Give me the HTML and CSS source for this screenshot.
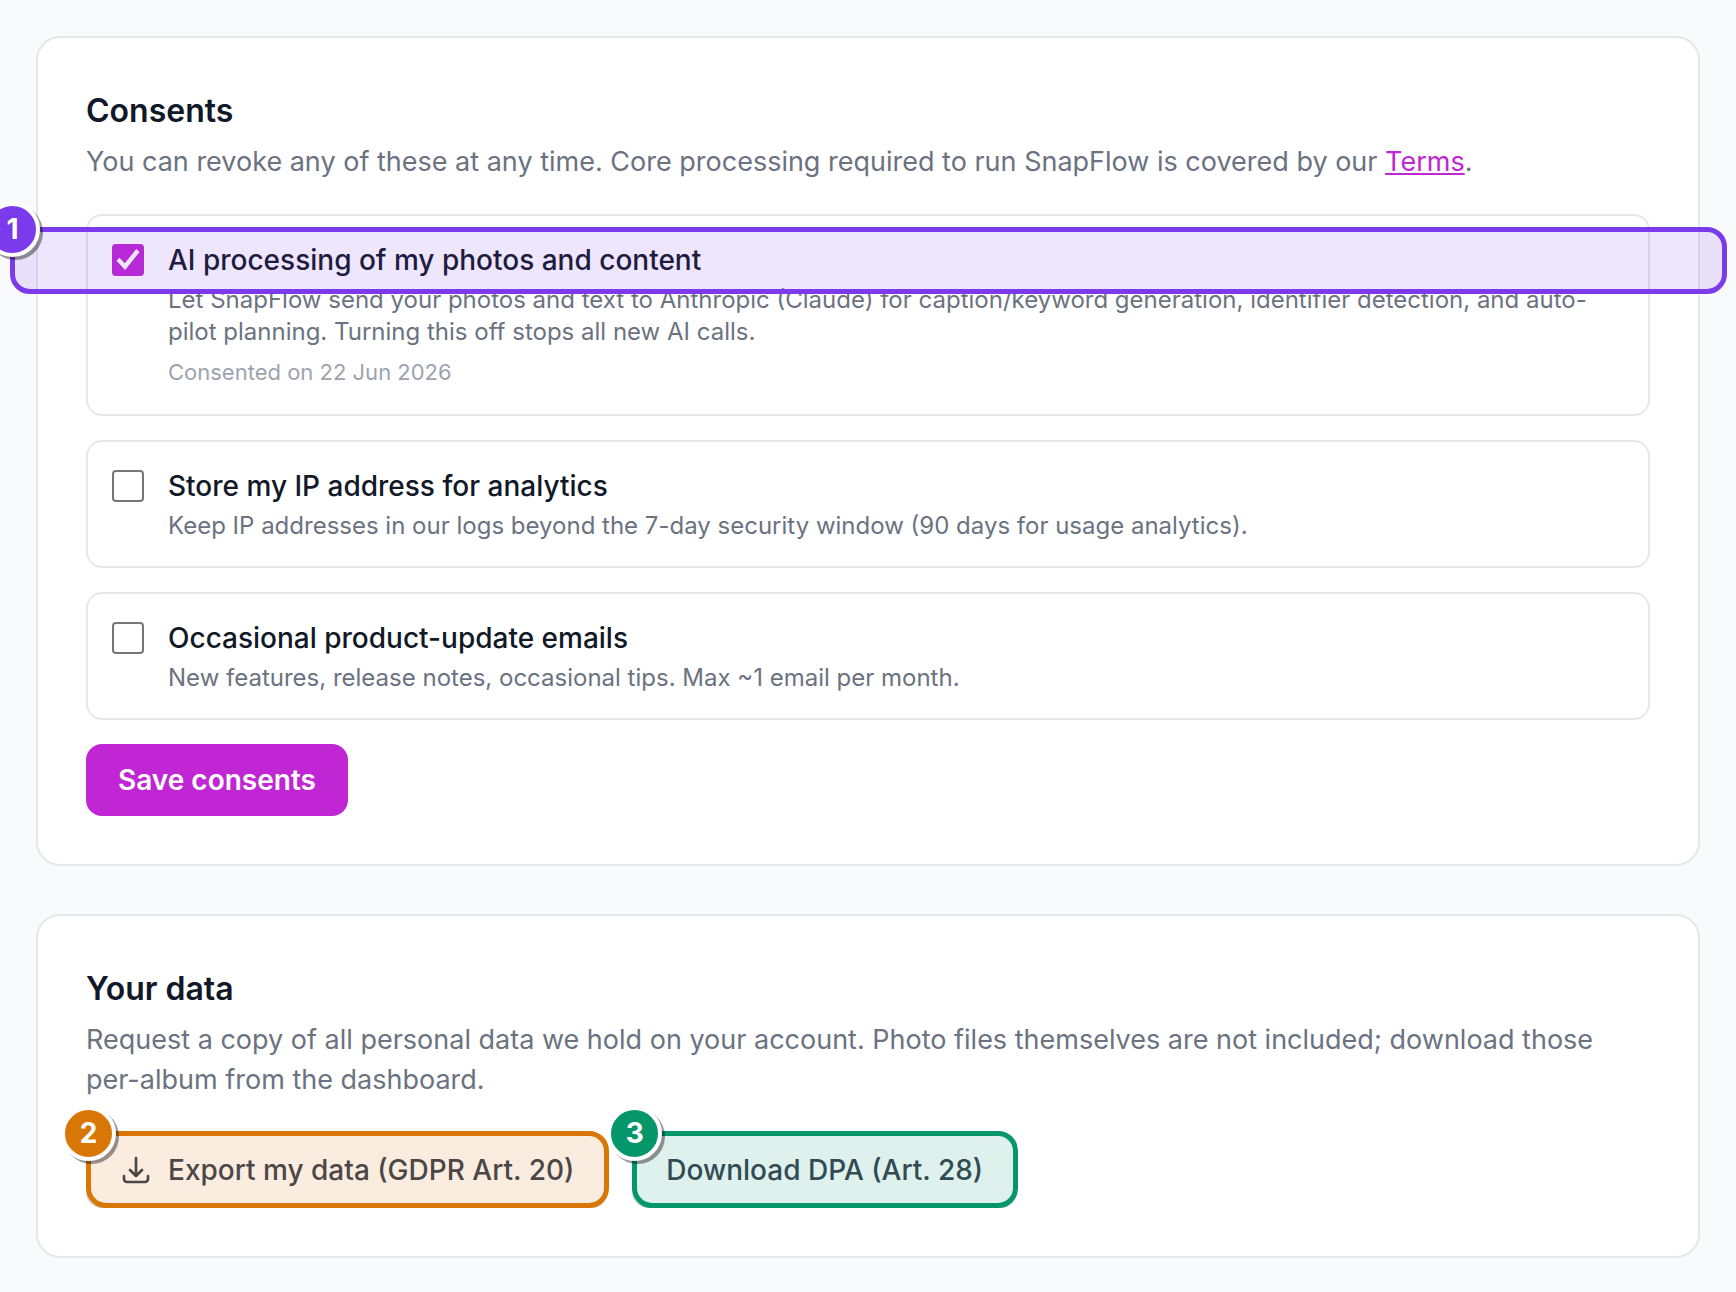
FILE: index.html
```html
<!DOCTYPE html>
<html lang="en">
<head>
  <meta charset="UTF-8">
  <meta name="viewport" content="width=device-width, initial-scale=1">
  <title>SnapFlow - Privacy</title>
  <link rel="stylesheet" href="styles.css">
</head>
<body>
  <main class="page">
    <!-- Consents -->
    <section class="card">
      <h2>Consents</h2>
      <p class="intro">You can revoke any of these at any time. Core processing required to run SnapFlow is covered by our <a href="#terms">Terms</a>.</p>
      <form class="consents">
        <div class="option">
          <input type="checkbox" id="consentAi" checked>
          <div class="option-text">
            <label for="consentAi">AI processing of my photos and content</label>
            <p>Let SnapFlow send your photos and text to Anthropic (Claude) for caption/keyword generation, identifier detection, and auto-pilot planning. Turning this off stops all new AI calls.</p>
            <p class="meta">Consented on 22 Jun 2026</p>
          </div>
          <div class="callout callout-row purple"><span class="badge">1</span></div>
        </div>
        <div class="option">
          <input type="checkbox" id="consentIp">
          <div class="option-text">
            <label for="consentIp">Store my IP address for analytics</label>
            <p>Keep IP addresses in our logs beyond the 7-day security window (90 days for usage analytics).</p>
          </div>
        </div>
        <div class="option">
          <input type="checkbox" id="consentEmail">
          <div class="option-text">
            <label for="consentEmail">Occasional product-update emails</label>
            <p>New features, release notes, occasional tips. Max ~1 email per month.</p>
          </div>
        </div>
        <button type="button" class="btn-primary">Save consents</button>
      </form>
    </section>

    <!-- Your data -->
    <section class="card">
      <h2>Your data</h2>
      <p class="intro">Request a copy of all personal data we hold on your account. Photo files themselves are not included; download those per-album from the dashboard.</p>
      <div class="actions">
        <div class="action">
          <button type="button" class="btn-secondary">
            <svg class="icon" viewBox="0 0 24 24" fill="none" stroke="currentColor" stroke-width="2" stroke-linecap="round" stroke-linejoin="round" aria-hidden="true">
              <path d="M3 16.5v2.25A2.25 2.25 0 0 0 5.25 21h13.5A2.25 2.25 0 0 0 21 18.75V16.5M16.5 12 12 16.5m0 0L7.5 12m4.5 4.5V3"/>
            </svg>
            Export my data (GDPR Art. 20)
          </button>
          <div class="callout orange"><span class="badge">2</span></div>
        </div>
        <div class="action">
          <button type="button" class="btn-secondary">Download DPA (Art. 28)</button>
          <div class="callout green"><span class="badge">3</span></div>
        </div>
      </div>
    </section>
  </main>
</body>
</html>
```

FILE: styles.css
```css
* {
  box-sizing: border-box;
  margin: 0;
  padding: 0;
}
body {
  background: #f9fafb;
  font-family: Inter, "Liberation Sans", sans-serif;
  font-size: 28px;
  line-height: 40px;
  color: #111827;
}
.page {
  display: flex;
  flex-direction: column;
  gap: 48px;
  padding: 36px;
}
.card {
  background: white;
  border: 2px solid #e5e7eb;
  border-radius: 24px;
  padding: 48px;
}
h2 {
  font-size: 32px;
  font-weight: 600;
  line-height: 50px;
  margin-bottom: 6px;
}
.intro {
  font-size: 27px;
  color: #6b7280;
  margin-bottom: 32px;
}
.intro a {
  color: #c026d3;
}

/* Consent options */
.consents {
  display: flex;
  flex-direction: column;
  align-items: flex-start;
  gap: 24px;
}
.option {
  position: relative;
  display: flex;
  align-items: flex-start;
  gap: 24px;
  width: 100%;
  padding: 24px;
  border: 2px solid #e5e7eb;
  border-radius: 16px;
}
.option input {
  appearance: none;
  flex: none;
  width: 32px;
  height: 32px;
  margin-top: 4px;
  border: 2px solid #767676;
  border-radius: 4px;
  background: white;
}
.option input:checked {
  border: none;
  background: #c026d3;
}
.option input:checked::before {
  content: "";
  display: block;
  width: 32px;
  height: 32px;
  background: white;
  clip-path: polygon(14% 52%, 23% 43%, 40% 60%, 76% 16%, 86% 25%, 41% 81%);
}
.option-text {
  flex: 1;
}
.option label {
  display: block;
  font-weight: 500;
  margin-bottom: 4px;
}
.option p {
  font-size: 24px;
  line-height: 32px;
  color: #6b7280;
}
.option .meta {
  font-size: 22px;
  margin: 8px 0 2px;
  color: #9ca3af;
}

/* Buttons */
button {
  font: inherit;
  cursor: pointer;
}
.btn-primary {
  padding: 16px 32px;
  border: none;
  border-radius: 16px;
  background: #c026d3;
  color: white;
  font-weight: 600;
}
.btn-secondary {
  display: flex;
  align-items: center;
  gap: 16px;
  padding: 16px 32px;
  border: 2px solid #d1d5db;
  border-radius: 16px;
  background: white;
  color: #374151;
  font-weight: 500;
}
.icon {
  width: 32px;
  height: 32px;
}
.actions {
  display: flex;
  flex-wrap: wrap;
  gap: 24px;
}
.action {
  position: relative;
}

/* Numbered callouts laid over the controls */
.callout {
  position: absolute;
  inset: -1px -1px 0 0;
  border: 5px solid;
  border-radius: 20px;
  pointer-events: none;
}
.callout-row {
  inset: 11px -79px auto -78px;
  height: 67px;
}
.purple {
  --tone: #7c3aed;
  border-color: #7c3aed;
  background: rgba(124, 58, 237, 0.13);
}
.orange {
  --tone: #d97706;
  border-color: #d97706;
  background: rgba(217, 119, 6, 0.13);
}
.green {
  --tone: #059669;
  border-color: #059669;
  background: rgba(5, 150, 105, 0.13);
}
.badge {
  position: absolute;
  top: -30px;
  left: -30px;
  width: 55px;
  height: 55px;
  border: 4px solid white;
  border-radius: 50%;
  background: var(--tone);
  box-shadow: 3px 3px 0 rgba(0, 0, 0, 0.4);
  color: white;
  font-size: 28px;
  font-weight: 700;
  line-height: 47px;
  text-align: center;
}
```
